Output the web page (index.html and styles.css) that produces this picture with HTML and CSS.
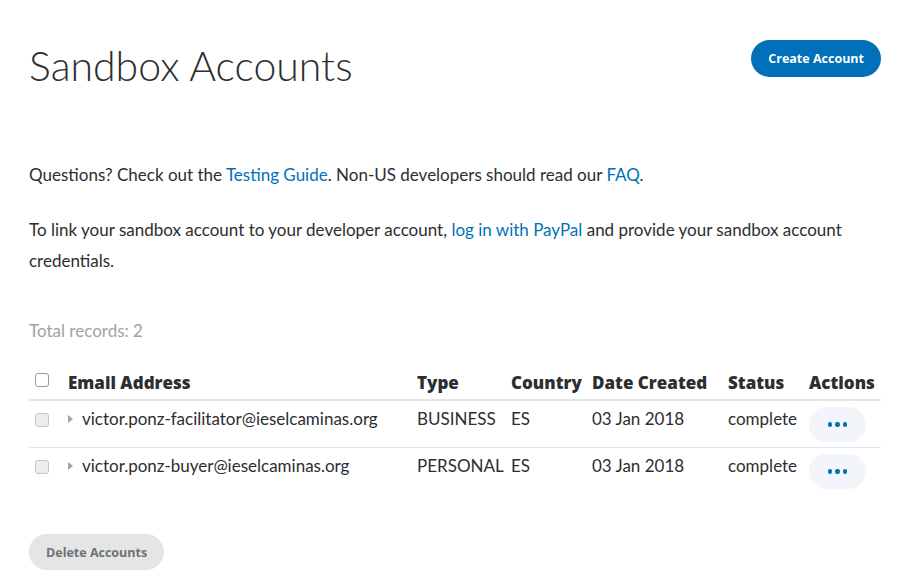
FILE: index.html
```html
<!DOCTYPE html>
<html>
<head>
<meta charset="utf-8">
<link rel="stylesheet" href="styles.css">
</head>
<body>
<div class="page">
  <header class="top">
    <h1 class="title">Sandbox Accounts</h1>
    <button class="btn btn-primary">Create Account</button>
  </header>
  <p class="intro">Questions? Check out the <a href="#">Testing Guide</a>. Non-US developers should read our <a href="#">FAQ</a>.</p>
  <p class="intro">To link your sandbox account to your developer account, <a href="#">log in with PayPal</a> and provide your sandbox account credentials.</p>
  <p class="total">Total records: 2</p>
  <table class="accounts">
    <thead>
      <tr>
        <th class="c-check"><span class="cb cb-head"></span></th>
        <th class="c-email">Email Address</th>
        <th class="c-type">Type</th>
        <th class="c-country">Country</th>
        <th class="c-date">Date Created</th>
        <th class="c-status">Status</th>
        <th class="c-actions">Actions</th>
      </tr>
    </thead>
    <tbody>
      <tr>
        <td><span class="cb"></span></td>
        <td><span class="caret"></span>victor.ponz-facilitator@ieselcaminas.org</td>
        <td>BUSINESS</td>
        <td>ES</td>
        <td>03 Jan 2018</td>
        <td>complete</td>
        <td><button class="more"><span></span><span></span><span></span></button></td>
      </tr>
      <tr>
        <td><span class="cb"></span></td>
        <td><span class="caret"></span>victor.ponz-buyer@ieselcaminas.org</td>
        <td>PERSONAL</td>
        <td>ES</td>
        <td>03 Jan 2018</td>
        <td>complete</td>
        <td><button class="more"><span></span><span></span><span></span></button></td>
      </tr>
    </tbody>
  </table>
  <button class="btn btn-disabled">Delete Accounts</button>
</div>
</body>
</html>
```
FILE: styles.css
```css
html, body { margin: 0; padding: 0; background: #fff; }
body {
  font-family: "Lato", "Open Sans", sans-serif;
  color: #2c2e2f;
}
.page {
  width: 852px;
  padding: 40px 0 0 29px;
}
.top {
  display: flex;
  justify-content: space-between;
  align-items: flex-start;
  height: 119px;
}
.title {
  margin: 0;
  font-weight: 300;
  font-size: 41px;
  line-height: 52px;
  color: #2c2e2f;
}
.btn {
  font-family: "Open Sans", sans-serif;
  font-weight: 700;
  font-size: 12.5px;
  border: none;
  border-radius: 20px;
  height: 37px;
  padding: 0 17px;
}
.btn-primary {
  background: #0070ba;
  color: #fff;
}
.intro {
  margin: 0 0 24px;
  font-size: 17px;
  line-height: 31px;
}
.intro a { color: #0070ba; text-decoration: none; }
.total {
  margin: 43px 0 22px;
  font-size: 17px;
  line-height: 24px;
  color: #9da3a6;
}
.accounts {
  width: 852px;
  border-collapse: collapse;
  table-layout: fixed;
  font-size: 17px;
}
.accounts th {
  text-align: left;
  font-family: "Open Sans", sans-serif;
  font-weight: 800;
  font-size: 17px;
  height: 34px;
  padding: 0;
  vertical-align: middle;
  border-bottom: 2px solid #e5e5e5;
  color: #2c2e2f;
  white-space: nowrap;
}
.c-check { width: 39px; }
.c-email { width: 349px; }
.c-type { width: 94px; }
.c-country { width: 81px; }
.c-date { width: 136px; }
.c-status { width: 81px; }
.c-actions { width: 72px; }
.accounts td {
  padding: 6px 0 0;
  height: 40px;
  vertical-align: top;
  line-height: 24px;
  white-space: nowrap;
  color: #2c2e2f;
}
.accounts tbody tr:first-child td { border-bottom: 1px solid #e5e5e5; }
.cb {
  display: inline-block;
  width: 12px;
  height: 12px;
  border: 1px solid #c5c5c5;
  border-radius: 3px;
  background: #ececec;
  margin: 6px 0 0 6px;
  vertical-align: top;
}
.cb-head { background: #fff; border-color: #9a9a9a; margin-top: 2px; }
.caret {
  display: inline-block;
  width: 0; height: 0;
  border-top: 4px solid transparent;
  border-bottom: 4px solid transparent;
  border-left: 5px solid #a4a4a4;
  margin: 8px 9px 0 0;
  vertical-align: top;
}
.more {
  display: flex;
  align-items: center;
  justify-content: center;
  gap: 3px;
  width: 57px;
  height: 35px;
  margin-top: 0;
  border: none;
  border-radius: 18px;
  background: #f2f5f9;
  padding: 0;
}
.more span {
  width: 4.5px; height: 4.5px;
  border-radius: 50%;
  background: #0070ba;
}
.btn-disabled {
  margin-top: 40px;
  height: 36px;
  padding: 0 17px;
  background: #e5e5e5;
  color: #6c7378;
}
```
